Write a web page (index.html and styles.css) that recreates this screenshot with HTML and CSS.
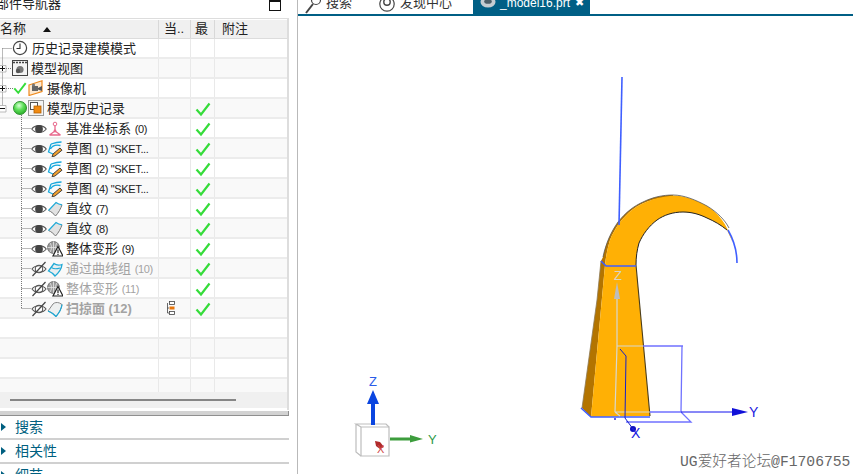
FILE: index.html
```html
<!DOCTYPE html>
<html lang="zh">
<head>
<meta charset="utf-8">
<title>部件导航器</title>
<link rel="stylesheet" href="styles.css">
</head>
<body>
<svg class="defs" aria-hidden="true">
  <symbol id="eye" viewBox="0 0 16 16">
    <path d="M.8 8C4 3.4 12 3.4 15.200 8C12 12.600 4 12.600 .8 8Z" fill="#fff" stroke="#555" stroke-width="1.2"/>
    <circle cx="8" cy="8" r="3.9" fill="#444"/>
  </symbol>
  <symbol id="eyeoff" viewBox="0 0 16 16">
    <path d="M1 8C4 3.6 12 3.6 15 8C12 12.4 4 12.4 1 8Z" fill="#fff" stroke="#555" stroke-width="1.1"/>
    <circle cx="8" cy="8" r="3.7" fill="none" stroke="#555" stroke-width="1.1"/>
    <path d="M1.5 15L14.5 1" stroke="#444" stroke-width="1.2"/>
  </symbol>
  <symbol id="check" viewBox="0 0 16 16">
    <path d="M1.5 8.5L6 13.5L14.5 2.5" fill="none" stroke="#35dc3a" stroke-width="2.2"/>
  </symbol>
  <symbol id="sketch" viewBox="0 0 16 16">
    <path d="M4 3C7 2 11 1 14.500 1M4 3L1.500 11L6 13M3.500 8C5 5 9 3.500 13.500 4.500" fill="none" stroke="#18a8dc" stroke-width="1.3"/>
    <path d="M5 15.800L6 13L13 7L15 9.200L8 15Z" fill="#f0a030" stroke="#333" stroke-width=".9"/>
  </symbol>
  <symbol id="ruled" viewBox="0 0 16 16">
    <path d="M1.5 9.5L9 1.5C11 3 13.5 3.6 15 3.8C14 7 11.5 12 8.5 15C6.5 12.5 4 10.5 1.5 9.5Z" fill="#e2e2e2"/>
    <path d="M1.5 9.5C4 10.5 6.5 12.5 8.5 15C11.5 12 14 7 15 3.8" fill="none" stroke="#777" stroke-width="1"/>
    <path d="M1.5 9.5L9 1.5C11 3 13.5 3.6 15 3.8" fill="none" stroke="#1fa9d6" stroke-width="1.2"/>
  </symbol>
  <symbol id="through" viewBox="0 0 16 16">
    <path d="M1.5 10L7 2.5C9.5 4.5 12 4.5 15 3.5C14.5 8 11.5 12 8 15C6.5 13 4 11 1.5 10Z" fill="#e8eef0" stroke="#1fa9d6" stroke-width="1.3"/>
    <path d="M4.5 6.5C7 8.5 10 8 13 7" fill="none" stroke="#1fa9d6" stroke-width="1.1"/>
  </symbol>
  <symbol id="sweep" viewBox="0 0 16 16">
    <path d="M1 10L6 3C7.5 1.5 10 1 12.5 2L15 3.5C14.5 8 12 12 9 15.5C6.5 13 4 11 1 10Z" fill="#eef0f0" stroke="#888" stroke-width="1"/>
    <path d="M1 10C4 11 6.5 13 9 15.5C12 12 14.5 8 15 3.5" fill="none" stroke="#1fa9d6" stroke-width="1.2"/>
  </symbol>
  <symbol id="morph" viewBox="0 0 16 16">
    <circle cx="6.5" cy="6.5" r="6" fill="#9b9b9b" stroke="#666" stroke-width=".8"/>
    <path d="M6.5 .5V12.5M.5 6.5H12.5M3 1.8C5 5 5 8 3 11.2M10 1.8C8 5 8 8 10 11.2" fill="none" stroke="#e4e4e4" stroke-width=".8"/>
    <path d="M11 5.5L16 15H6Z" fill="#fff" stroke="#222" stroke-width="1.2"/>
    <path d="M11 8.5V12M11 12.8V14" stroke="#222" stroke-width="1.2"/>
  </symbol>
</svg>

<div class="app">
  <aside class="nav">
    <div class="nav-title">
      <span class="nav-title-text">部件导航器</span>
      <span class="maximize"></span>
    </div>
    <div class="tree">
      <div class="head">
        <div class="c c-name"><span>名称</span><span class="sort"></span></div>
        <div class="c c-cur">当..</div>
        <div class="c c-new">最</div>
        <div class="c c-note">附注</div>
      </div>
      <div class="rows">
        <div class="row">
          <div class="c c-name pad-root">
            <svg class="ic" viewBox="0 0 16 16"><circle cx="8" cy="8" r="6.6" fill="#fff" stroke="#444" stroke-width="1.2"/><path d="M8 3.5V8.5H4.5" fill="none" stroke="#333" stroke-width="1.1"/></svg>
            <span class="t t-clock">历史记录建模模式</span>
          </div>
          <div class="c c-cur"></div><div class="c c-new"></div><div class="c c-note"></div>
        </div>
        <div class="row">
          <div class="c c-name pad-root">
            <svg class="ic" viewBox="0 0 16 16"><rect x=".5" y=".5" width="15" height="15" fill="#f4f4f4" stroke="#444"/><path d="M1 2.5H15" stroke="#444" stroke-width="1.4" stroke-dasharray="2 1"/><circle cx="8" cy="9.5" r="3.6" fill="#777"/><circle cx="6" cy="11" r="2.2" fill="#555"/></svg>
            <span class="t">模型视图</span>
          </div>
          <div class="c c-cur"></div><div class="c c-new"></div><div class="c c-note"></div>
        </div>
        <div class="row">
          <div class="c c-name pad-one">
            <svg class="ic ic-14" viewBox="0 0 16 16"><use href="#check"/></svg>
            <svg class="ic ic-gap" viewBox="0 0 16 16"><path d="M1 5L14 .8V11.5L1 15.5Z" fill="#fde9d0" stroke="#ee8a1e" stroke-width="1.2"/><rect x="4" y="6" width="6" height="5" fill="#666"/><path d="M10 8L14 6V11L10 9.5Z" fill="#555"/><circle cx="5.5" cy="5" r="1.6" fill="#777"/></svg>
            <span class="t">摄像机</span>
          </div>
          <div class="c c-cur"></div><div class="c c-new"></div><div class="c c-note"></div>
        </div>
        <div class="row">
          <div class="c c-name pad-one">
            <span class="sphere"></span>
            <svg class="ic ic-gap" viewBox="0 0 16 16"><rect x=".5" y=".5" width="15" height="15" fill="#f4f4f4" stroke="#999"/><rect x="2.5" y="2.5" width="7" height="7" fill="#fff" stroke="#555"/><rect x="6" y="6" width="7" height="7" fill="#f08a12" stroke="#b56000" stroke-width=".8"/></svg>
            <span class="t">模型历史记录</span>
          </div>
          <div class="c c-cur"></div><div class="c c-new"><svg class="ck"><use href="#check"/></svg></div><div class="c c-note"></div>
        </div>
        <div class="row">
          <div class="c c-name pad-two">
            <svg class="ic"><use href="#eye"/></svg>
            <svg class="ic" viewBox="0 0 16 16"><path d="M8 5V10L2.5 14M8 10L13.5 14M2.5 14H13.5" fill="none" stroke="#e8688c" stroke-width="1.3"/><circle cx="8" cy="3" r="1.8" fill="none" stroke="#e8688c"/><circle cx="8" cy="10" r="1.4" fill="#e8688c"/></svg>
            <span class="t">基准坐标系 <span class="la">(0)</span></span>
          </div>
          <div class="c c-cur"></div><div class="c c-new"><svg class="ck"><use href="#check"/></svg></div><div class="c c-note"></div>
        </div>
        <div class="row">
          <div class="c c-name pad-two">
            <svg class="ic"><use href="#eye"/></svg><svg class="ic"><use href="#sketch"/></svg>
            <span class="t">草图 <span class="la">(1) "SKET...</span></span>
          </div>
          <div class="c c-cur"></div><div class="c c-new"><svg class="ck"><use href="#check"/></svg></div><div class="c c-note"></div>
        </div>
        <div class="row">
          <div class="c c-name pad-two">
            <svg class="ic"><use href="#eye"/></svg><svg class="ic"><use href="#sketch"/></svg>
            <span class="t">草图 <span class="la">(2) "SKET...</span></span>
          </div>
          <div class="c c-cur"></div><div class="c c-new"><svg class="ck"><use href="#check"/></svg></div><div class="c c-note"></div>
        </div>
        <div class="row">
          <div class="c c-name pad-two">
            <svg class="ic"><use href="#eye"/></svg><svg class="ic"><use href="#sketch"/></svg>
            <span class="t">草图 <span class="la">(4) "SKET...</span></span>
          </div>
          <div class="c c-cur"></div><div class="c c-new"><svg class="ck"><use href="#check"/></svg></div><div class="c c-note"></div>
        </div>
        <div class="row">
          <div class="c c-name pad-two">
            <svg class="ic"><use href="#eye"/></svg><svg class="ic"><use href="#ruled"/></svg>
            <span class="t">直纹 <span class="la">(7)</span></span>
          </div>
          <div class="c c-cur"></div><div class="c c-new"><svg class="ck"><use href="#check"/></svg></div><div class="c c-note"></div>
        </div>
        <div class="row">
          <div class="c c-name pad-two">
            <svg class="ic"><use href="#eye"/></svg><svg class="ic"><use href="#ruled"/></svg>
            <span class="t">直纹 <span class="la">(8)</span></span>
          </div>
          <div class="c c-cur"></div><div class="c c-new"><svg class="ck"><use href="#check"/></svg></div><div class="c c-note"></div>
        </div>
        <div class="row">
          <div class="c c-name pad-two">
            <svg class="ic"><use href="#eye"/></svg><svg class="ic"><use href="#morph"/></svg>
            <span class="t">整体变形 <span class="la">(9)</span></span>
          </div>
          <div class="c c-cur"></div><div class="c c-new"><svg class="ck"><use href="#check"/></svg></div><div class="c c-note"></div>
        </div>
        <div class="row">
          <div class="c c-name pad-two">
            <svg class="ic"><use href="#eyeoff"/></svg><svg class="ic"><use href="#through"/></svg>
            <span class="t off">通过曲线组 <span class="la">(10)</span></span>
          </div>
          <div class="c c-cur"></div><div class="c c-new"><svg class="ck"><use href="#check"/></svg></div><div class="c c-note"></div>
        </div>
        <div class="row">
          <div class="c c-name pad-two">
            <svg class="ic"><use href="#eyeoff"/></svg><svg class="ic"><use href="#morph"/></svg>
            <span class="t off">整体变形 <span class="la">(11)</span></span>
          </div>
          <div class="c c-cur"></div><div class="c c-new"><svg class="ck"><use href="#check"/></svg></div><div class="c c-note"></div>
        </div>
        <div class="row">
          <div class="c c-name pad-two">
            <svg class="ic"><use href="#eyeoff"/></svg><svg class="ic"><use href="#sweep"/></svg>
            <span class="t off strong">扫掠面 (12)</span>
          </div>
          <div class="c c-cur c-status">
            <svg class="status" viewBox="0 0 8 14"><path d="M.5 2V12H2M.5 7H2" stroke="#444" stroke-width=".8" fill="none"/><rect x="2.500" y=".5" width="5" height="3" fill="#fff" stroke="#444" stroke-width=".8"/><rect x="2.500" y="5.500" width="5" height="3" fill="#e8760c"/><rect x="2.500" y="10.500" width="5" height="3" fill="#fff" stroke="#444" stroke-width=".8"/></svg>
          </div>
          <div class="c c-new"><svg class="ck"><use href="#check"/></svg></div><div class="c c-note"></div>
        </div>
        <div class="row"><div class="c c-name"></div><div class="c c-cur"></div><div class="c c-new"></div><div class="c c-note"></div></div>
        <div class="row"><div class="c c-name"></div><div class="c c-cur"></div><div class="c c-new"></div><div class="c c-note"></div></div>
        <div class="row"><div class="c c-name"></div><div class="c c-cur"></div><div class="c c-new"></div><div class="c c-note"></div></div>
        <div class="row"><div class="c c-name"></div><div class="c c-cur"></div><div class="c c-new"></div><div class="c c-note"></div></div>
        <svg class="connectors" viewBox="0 0 40 353" aria-hidden="true">
          <path d="M2.500 9.500V69M2.500 9.500H12M6 29.500H12M6 49.500H13M21.500 76V270M21.500 89.500H31M21.500 109.500H31M21.500 129.500H31M21.500 149.500H31M21.500 169.500H31M21.500 189.500H31M21.500 209.500H31M21.500 229.500H31M21.500 249.500H31M21.500 269.500H31" fill="none" stroke="#777" stroke-dasharray="1 1"/>
          <path d="M-1 26.500H6V33H-1ZM-1 46.500H6V53H-1ZM-1 66.500H6V73H-1Z" fill="#fff" stroke="#aaa" stroke-width=".8"/>
          <path d="M0 29.500H5M2.500 27V32M0 49.500H5M2.500 47V52M0 69.500H5" fill="none" stroke="#111"/>
        </svg>
      </div>
      <div class="hscroll"><span class="thumb"></span></div>
    </div>
    <div class="splitter"></div>
    <div class="section"><span class="tri"></span><span class="sec-label">搜索</span></div>
    <div class="section"><span class="tri"></span><span class="sec-label">相关性</span></div>
    <div class="section"><span class="tri"></span><span class="sec-label">细节</span></div>
  </aside>

  <main class="main">
    <div class="tabs">
      <div class="tab tab-search">
        <svg class="tab-ic" viewBox="0 0 16 20"><circle cx="11" cy="6" r="4.500" fill="#fff" stroke="#444" stroke-width="1.2"/><path d="M8 10L1 19" stroke="#444" stroke-width="2"/></svg>
        <span>搜索</span>
      </div>
      <div class="tab tab-find">
        <svg class="tab-ic" viewBox="0 0 16 20"><circle cx="8" cy="10" r="7.200" fill="#fff" stroke="#444" stroke-width="1.2"/><circle cx="8" cy="8" r="3.200" fill="none" stroke="#444" stroke-width="1.400"/></svg>
        <span>发现中心</span>
      </div>
      <div class="tab tab-active">
        <svg class="tab-ic" viewBox="0 0 16 20"><ellipse cx="8" cy="8" rx="7.500" ry="5.500" fill="#c4cdd2"/><ellipse cx="8" cy="7.500" rx="3.800" ry="2.300" fill="#4d5f68"/></svg>
        <span class="tab-name">_model16.prt</span>
        <span class="tab-close">✖</span>
      </div>
    </div>

    <svg class="scene" viewBox="298 16 555 458">
      <!-- solid -->
      <path d="M582 408L597 300L601 261L603 257C606 243 611 232 618 222C626 212 634 206 643 202C653 197 663 195 673 195L673 197C661 197 645 200 632 210C622 218 615 228 610 240C608 247 606 255 605 265L591 417Z" fill="#b37400"/>
      <path d="M591 417L605 265C606 255 608 247 610 240C615 228 622 218 632 210C645 200 661 197 673 195.500C684 195.500 696 200 707 206C717 212 727 223 733 243L727 230C721 225 714 221 707 218C699 214 691 212 683 212C673 212 664 215 657 220C649 226 643 234 639 243C637 250 636 257 636 265L650 416Z" fill="#ffb005"/>
      <path d="M636 265L650 416" fill="none" stroke="#4a3c1a" stroke-width="1.1"/>
      <path d="M727 230C721 225 714 221 707 218C699 214 691 212 683 212C673 212 664 215 657 220C649 226 643 234 639 243C637 250 636 257 636 265" fill="none" stroke="#222" stroke-width="1"/>
      <path d="M603 257C606 243 611 232 618 222C626 212 634 206 643 202C653 197 663 195 673 195C684 195 696 200 707 206C717 212 725 220 729 228" fill="none" stroke="#555" stroke-width=".8"/>
      <path d="M601 261L597 300L582 408" fill="none" stroke="#8d7a55" stroke-width=".8"/>
      <!-- blue edges -->
      <g fill="none" stroke="#3f5fff" stroke-width="1.6">
        <path d="M622 77L619 225"/>
        <path d="M601 261L606 266H636"/>
        <path d="M728 230C732 237 737 250 737 263"/>
        <path d="M581 408L591 417H650"/>
      </g>
      <!-- datum -->
      <g fill="none" stroke-width="1">
        <path d="M643 346H683M682 346L681 412M650 412H681M681 412L691 422H626" stroke="#7072ff" stroke-width="1.3"/>
        <path d="M617 297V346L615 412M617 346H643M615 412H650M615 412L620 416" stroke="#d8d8d0" stroke-width="1.2"/>
        <path d="M620 349L626 356L625 418L633 429" stroke="#1620c8"/>
        <path d="M681 412H732" stroke="#1010ee"/>
        <path d="M615 418V420" stroke="#1010cc" stroke-width="1.3"/>
      </g>
      <path d="M617 282L614 299H620Z" fill="#bdbdbd"/>
      <path d="M732 408L748 412L732 416Z" fill="#1010d8"/>
      <circle cx="633" cy="429" r="3" fill="#1010c0"/>
      <text class="lbl-z" x="618" y="280">Z</text>
      <text class="lbl-axis" x="749" y="417">Y</text>
      <text class="lbl-axis" x="631" y="438">X</text>
      <!-- triad -->
      <g fill="none" stroke="#bdbdbd" stroke-width="1.2">
        <path d="M361 427H389V456H361Z" fill="#fff"/>
        <path d="M361 427L356 424H386L389 427M356 424V452L361 456"/>
      </g>
      <path d="M371 425V404H367L373 390L379 404H375V425Z" fill="#0a45e0"/>
      <path d="M390 437.500H410V435L423 439L410 442.500V440.500H390Z" fill="#3d9d3d"/>
      <path d="M375 441L380 442L384 447L380 449L376 446Z" fill="#b02a2a"/>
      <text class="lbl-tz" x="369" y="386">Z</text>
      <text class="lbl-ty" x="428" y="444">Y</text>
      <text class="lbl-tx" x="377" y="453">X</text>
      <text class="mark" x="680" y="466">UG爱好者论坛@F1706755</text>
    </svg>
  </main>
</div>
</body>
</html>
```
FILE: styles.css
```css
* { box-sizing: border-box; }
html, body { margin: 0; height: 100%; overflow: hidden; background: #fff; }
body { font: 13px/18px "Liberation Sans", "Noto Sans CJK SC", sans-serif; color: #222; }
.defs { display: none; }
.app { display: flex; width: 853px; height: 474px; overflow: hidden; }

/* navigator */
.nav { flex: 0 0 298px; width: 298px; height: 474px; padding-right: 9px; border-right: 1px solid #b9b9b9; overflow: hidden; }
.nav-title { height: 18px; display: flex; justify-content: space-between; overflow: hidden; padding-right: 7px; }
.nav-title-text { margin: -5px 0 0 -4px; font-size: 13px; line-height: 18px; }
.maximize { width: 12px; height: 11px; border: 1px solid #111; border-top-width: 2px; }
.tree { width: 289px; height: 392px; border-top: 1px solid #ddd; border-right: 2px solid #ddd; padding-top: 1px; }
.head { display: flex; height: 19px; background: #f0f0f0; border-bottom: 1px solid #dcdcdc; }
.rows { position: relative; height: 353px; overflow: hidden; }
.row { display: flex; height: 20px; border-bottom: 2px solid #ececec; background: #fff; }
.row:nth-child(even) { background: #f9f9f9; }
.c { flex: none; display: flex; align-items: center; height: 100%; border-right: 1px solid #e9e9e9; white-space: nowrap; }
.head .c { border-right-color: #d8d8d8; }
.c-name { width: 159px; }
.c-cur { width: 32px; padding-left: 5px; }
.c-new { width: 24px; padding-left: 4px; }
.c-note { flex: 1; padding-left: 7px; border-right: 0; }
.sort { width: 0; height: 0; margin-left: 17px; border: 4.5px solid transparent; border-top: 0; border-bottom: 5px solid #111; }
.pad-root { padding-left: 12px; }
.pad-one { padding-left: 13px; }
.pad-two { padding-left: 31px; }
.pad-two .ic { margin-top: 2px; }
.ic { flex: none; width: 16px; height: 16px; }
.ic-14 { width: 14px; height: 14px; }
.ic-gap { margin-left: 1px; }
.t { margin-left: 3px; padding-top: 2px; line-height: 18px; }
.t-clock { margin-left: 4px; }
.la { font-size: 11px; letter-spacing: -.35px; }
.off { color: #a3a3a3; }
.strong { font-weight: 700; }
.sphere { flex: none; width: 14px; height: 14px; border-radius: 50%; background: radial-gradient(circle at 42% 30%, #d9ffd6 0, #5fe05a 40%, #169a16 100%); border: 1px solid #2b8f2b; }
.ck { display: block; width: 16px; height: 16px; margin-top: 2px; }
.status { width: 8px; height: 14px; margin-left: 3px; }
.connectors { position: absolute; left: 0; top: 0; width: 40px; height: 353px; overflow: hidden; }
.hscroll { display: flex; align-items: center; height: 16px; padding-left: 10px; background: #f0f0f0; }
.thumb { width: 226px; height: 2px; background: #868686; }
.splitter { width: 289px; height: 5px; margin-top: 1px; background: #d2d2d2; border-bottom: 1px solid #8f8f8f; border-right: 1px solid #8f8f8f; }
.section { display: flex; align-items: center; width: 289px; height: 24px; padding-left: 1px; border-bottom: 2px solid #d0d0d0; color: #005f80; font-size: 14px; }
.tri { width: 0; height: 0; border-left: 5px solid #005f80; border-top: 4px solid transparent; border-bottom: 4px solid transparent; }
.sec-label { margin-left: 9px; line-height: 18px; }

/* main */
.main { flex: 1; min-width: 0; display: flex; flex-direction: column; height: 474px; }
.tabs { flex: none; display: flex; height: 16px; overflow: hidden; border-bottom: 2px solid #005f85; font-size: 13px; }
.tab { display: flex; align-items: flex-start; gap: 5px; height: 14px; }
.tab span { margin-top: -6px; line-height: 18px; }
.tab-ic { flex: none; width: 16px; height: 20px; margin-top: -6px; }
.tab-search { width: 81px; padding-left: 7px; color: #333; }
.tab-find { width: 94px; color: #333; }
.tab-active { flex: none; width: 117px; padding-left: 7px; background: #005f85; color: #fff; gap: 4px; }
.tab .tab-name { font-size: 12px; }
.tab .tab-close { margin-left: 1px; font-size: 11px; font-family: "DejaVu Sans", sans-serif; }
.scene { display: block; width: 555px; height: 458px; }
.scene text { font-family: "Liberation Sans", sans-serif; }
.lbl-z { font-size: 13px; fill: #d8d4c6; text-anchor: middle; }
.lbl-axis { font-size: 14px; fill: #2020e0; }
.lbl-tz { font-size: 13px; fill: #2a5ce8; }
.lbl-ty { font-size: 13px; fill: #2f9a4a; }
.lbl-tx { font-size: 11px; fill: #d24a4a; }
.scene .mark { font-family: "Liberation Mono", "Noto Sans CJK SC", monospace; font-size: 14.7px; fill: #666; font-weight: 300; }
```
